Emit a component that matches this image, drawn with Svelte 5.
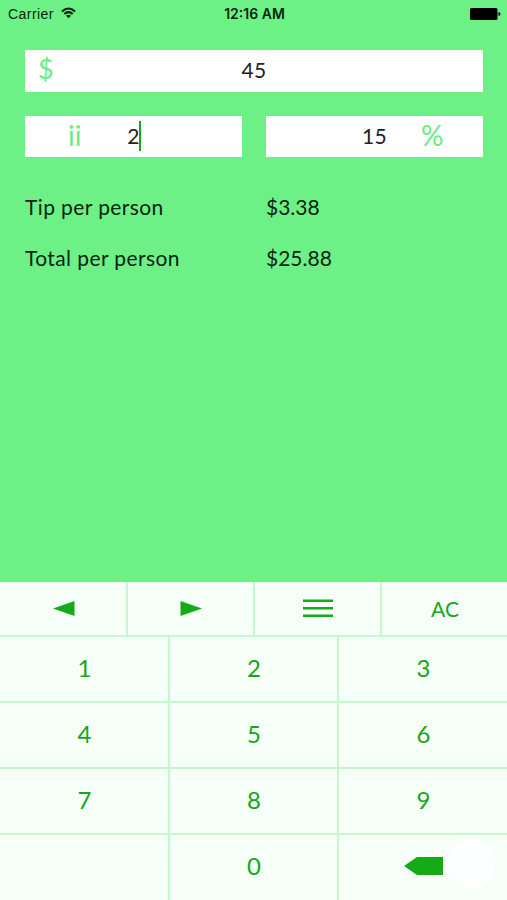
<script lang="ts">
  type Field = 'bill' | 'people' | 'percent';

  const order: Field[] = ['bill', 'people', 'percent'];
  const digits = ['1', '2', '3', '4', '5', '6', '7', '8', '9'];

  let values = $state<Record<Field, string>>({ bill: '45', people: '2', percent: '15' });
  let active = $state<Field>('people');

  let people = $derived(Math.max(1, Number(values.people)));
  let tip = $derived((Number(values.bill) * Number(values.percent)) / 100 / people);
  let total = $derived(Number(values.bill) / people + tip);

  function money(n: number) {
    return '$' + (Math.round(n * 100 + 1e-6) / 100).toFixed(2);
  }

  function move(step: number) {
    const next = order.indexOf(active) + step;
    active = order[(next + order.length) % order.length];
  }

  function press(digit: string) {
    values[active] += digit;
  }

  function backspace() {
    values[active] = values[active].slice(0, -1);
  }

  function clearAll() {
    values = { bill: '', people: '', percent: '' };
    active = 'bill';
  }
</script>

{#snippet value(name: Field)}
  <span class="value" class:active={active === name}>{values[name]}</span>
{/snippet}

<div class="screen">
  <header>
    <div class="carrier">
      <span>Carrier</span>
      <svg width="15" height="12" viewBox="0 0 16 12" fill="none" stroke="#07200c" stroke-width="2.2">
        <path d="M1 4.4Q8-2 15 4.4" />
        <path d="M3.5 7.1Q8 3 12.5 7.1" />
        <path d="M8 11.6L5.3 8.9Q8 6.7 10.7 8.9Z" fill="#07200c" stroke="none" />
      </svg>
    </div>
    <div class="time">12:16 AM</div>
    <div class="battery">
      <svg width="31" height="12" viewBox="0 0 31 12">
        <rect width="27.5" height="12" rx="1.5" />
        <path d="M28.5 4Q30.5 4.3 30.5 6T28.5 8Z" />
      </svg>
    </div>
  </header>

  <main>
    <div class="fields">
      <button class="field bill" onclick={() => (active = 'bill')}>
        <span class="sign">$</span>
        {@render value('bill')}
        <span></span>
      </button>
      <button class="field people" onclick={() => (active = 'people')}>
        <span class="sign">ii</span>
        {@render value('people')}
        <span></span>
      </button>
      <button class="field percent" onclick={() => (active = 'percent')}>
        <span></span>
        {@render value('percent')}
        <span class="sign">%</span>
      </button>
    </div>

    <div class="results">
      <span class="label">Tip per person</span>
      <span class="amount">{money(tip)}</span>
      <span class="label">Total per person</span>
      <span class="amount">{money(total)}</span>
    </div>
  </main>

  <div class="keyboard">
    <div class="toolbar">
      <button aria-label="Previous" onclick={() => move(-1)}>
        <svg width="22" height="15" viewBox="0 0 22 15"><path d="M0 7.5L21.5 0V15Z" /></svg>
      </button>
      <button aria-label="Next" onclick={() => move(1)}>
        <svg width="22" height="15" viewBox="0 0 22 15"><path d="M22 7.5L.5 0V15Z" /></svg>
      </button>
      <button aria-label="Menu">
        <svg width="30" height="19" viewBox="0 0 30 19">
          <path d="M0 .5H30V3H0ZM0 8H30V10.5H0ZM0 15.5H30V18H0Z" />
        </svg>
      </button>
      <button class="clear" onclick={clearAll}>AC</button>
    </div>
    <div class="keys">
      {#each digits as digit}
        <button onclick={() => press(digit)}>{digit}</button>
      {/each}
      <button aria-label="Blank"></button>
      <button onclick={() => press('0')}>0</button>
      <button class="delete" aria-label="Delete" onclick={backspace}>
        <svg width="39" height="18" viewBox="0 0 39 18"><path d="M0 9L13 0H39V18H13Z" /></svg>
        <span class="touch"></span>
      </button>
    </div>
  </div>
</div>

<style>
  :global(body) {
    margin: 0;
  }

  .screen {
    display: flex;
    flex-direction: column;
    height: 900px;
    overflow: hidden;
    background: #6df186;
    color: #07250d;
    font-family: Lato, sans-serif;
  }

  button {
    padding: 0;
    border: 0;
    border-radius: 0;
    background: none;
    color: inherit;
    font: inherit;
    cursor: pointer;
  }

  svg {
    display: block;
  }

  header {
    display: grid;
    grid-template-columns: 1fr auto 1fr;
    align-items: center;
    height: 28px;
    padding: 0 6px 0 8px;
    font: 14px/28px "Liberation Sans", sans-serif;
  }

  .carrier {
    display: flex;
    align-items: center;
    gap: 7px;
    letter-spacing: 0.45px;
  }

  .carrier svg {
    margin-bottom: 3px;
  }

  .time {
    font-family: Inter, sans-serif;
    font-size: 14px;
    font-weight: 600;
  }

  .battery {
    display: flex;
    justify-content: flex-end;
    margin-bottom: 1px;
  }

  main {
    flex: 1;
    padding: 22px 24px 0 25px;
  }

  .fields {
    display: grid;
    grid-template-columns: 1fr 1fr;
    gap: 24px;
  }

  .field {
    display: grid;
    grid-template-columns: 1fr auto 1fr;
    align-items: center;
    height: 41.5px;
    background: #fff;
    color: #222;
    font-size: 21px;
    line-height: 39px;
  }

  .bill {
    grid-column: span 2;
  }

  .value {
    display: flex;
    align-items: center;
    justify-content: center;
    height: 39px;
    margin-bottom: 2px;
    letter-spacing: 0.3px;
  }

  .active::after {
    content: '';
    width: 2px;
    height: 30px;
    margin: 1px -1px 0 -1px;
    background: #18a51b;
  }

  .sign {
    height: 38px;
    margin-bottom: 3px;
    color: #6bec83;
    font-size: 28px;
    line-height: 38px;
    text-align: left;
  }

  .bill .sign {
    padding-left: 13px;
    font-size: 27px;
  }

  .people .sign {
    padding-left: 43px;
  }

  .percent .sign {
    padding-left: 34px;
  }

  .results {
    display: grid;
    grid-template-columns: 241px 1fr;
    margin-top: 24px;
    font-size: 21px;
    line-height: 51px;
  }

  .label {
    letter-spacing: 0.4px;
  }

  .keyboard {
    height: 318px;
    background: #f6fff7;
    color: #18a51b;
    fill: #15ab18;
  }

  .toolbar {
    display: grid;
    grid-template-columns: 128px 127px 127px 1fr;
    height: 55px;
    box-sizing: border-box;
    border-bottom: 2px solid #c4f8ce;
  }

  .keys {
    display: grid;
    grid-template-columns: 170px 169px 1fr;
    grid-auto-rows: 66px;
    font-size: 24px;
    line-height: 28px;
  }

  .toolbar button,
  .keys button {
    display: flex;
    align-items: center;
    justify-content: center;
    box-sizing: border-box;
    padding-left: 1px;
    border-right: 2px solid #c4f8ce;
  }

  .keys button {
    padding-bottom: 3px;
    border-bottom: 2px solid #c4f8ce;
  }

  .toolbar button:last-child,
  .keys button:nth-child(3n) {
    border-right: 0;
  }

  .keys button:nth-child(n + 10) {
    padding-bottom: 5px;
    border-bottom: 0;
  }

  .clear {
    font-size: 21px;
  }

  .keys .delete {
    position: relative;
  }

  .touch {
    position: absolute;
    right: 12px;
    top: 3px;
    width: 49px;
    height: 51px;
    border-radius: 50%;
    background: #fff;
    opacity: 0.8;
  }
</style>
